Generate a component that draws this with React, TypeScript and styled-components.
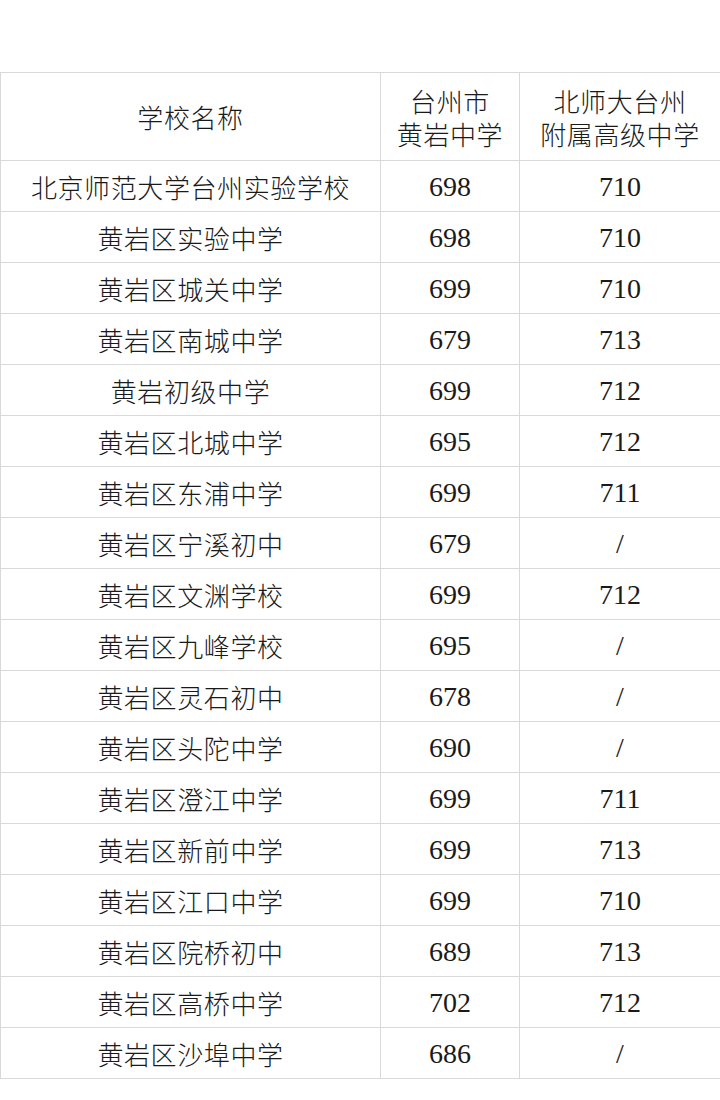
import React from "react";
import styled, { createGlobalStyle } from "styled-components";

const GlobalStyle = createGlobalStyle`
  html, body {
    margin: 0;
    padding: 0;
    background: #ffffff;
  }
`;

const Page = styled.div`
  width: 720px;
  padding-top: 72px;
`;

const Table = styled.table`
  width: 720px;
  border-collapse: collapse;
  table-layout: fixed;
`;

const Cell = styled.td<{ $head?: boolean; $num?: boolean }>`
  border: 1px solid #d9d9d9;
  height: ${(p) => (p.$head ? "87px" : "50px")};
  padding: 0;
  text-align: center;
  vertical-align: middle;
  font-family: ${(p) =>
    p.$num ? '"Liberation Serif", serif' : '"Noto Sans CJK SC", sans-serif'};
  font-size: ${(p) => (p.$num ? "28px" : "26px")};
  font-weight: ${(p) => (p.$num ? 400 : 300)};
  line-height: 33px;
  letter-spacing: ${(p) => (p.$num ? "0" : "0.6px")};
  color: #1a1a1a;
  white-space: nowrap;
`;

const HeadLine = styled.div`
  height: 33px;
  line-height: 33px;
`;

const rows: [string, string, string][] = [
  ["北京师范大学台州实验学校", "698", "710"],
  ["黄岩区实验中学", "698", "710"],
  ["黄岩区城关中学", "699", "710"],
  ["黄岩区南城中学", "679", "713"],
  ["黄岩初级中学", "699", "712"],
  ["黄岩区北城中学", "695", "712"],
  ["黄岩区东浦中学", "699", "711"],
  ["黄岩区宁溪初中", "679", "/"],
  ["黄岩区文渊学校", "699", "712"],
  ["黄岩区九峰学校", "695", "/"],
  ["黄岩区灵石初中", "678", "/"],
  ["黄岩区头陀中学", "690", "/"],
  ["黄岩区澄江中学", "699", "711"],
  ["黄岩区新前中学", "699", "713"],
  ["黄岩区江口中学", "699", "710"],
  ["黄岩区院桥初中", "689", "713"],
  ["黄岩区高桥中学", "702", "712"],
  ["黄岩区沙埠中学", "686", "/"],
];

export default function App() {
  return (
    <>
      <GlobalStyle />
      <Page>
        <Table>
          <colgroup>
            <col style={{ width: 380 }} />
            <col style={{ width: 139 }} />
            <col style={{ width: 201 }} />
          </colgroup>
          <thead>
            <tr>
              <Cell as="th" $head>学校名称</Cell>
              <Cell as="th" $head>
                <HeadLine>台州市</HeadLine>
                <HeadLine>黄岩中学</HeadLine>
              </Cell>
              <Cell as="th" $head>
                <HeadLine>北师大台州</HeadLine>
                <HeadLine>附属高级中学</HeadLine>
              </Cell>
            </tr>
          </thead>
          <tbody>
            {rows.map(([name, a, b]) => (
              <tr key={name}>
                <Cell>{name}</Cell>
                <Cell $num>{a}</Cell>
                <Cell $num>{b}</Cell>
              </tr>
            ))}
          </tbody>
        </Table>
      </Page>
    </>
  );
}
